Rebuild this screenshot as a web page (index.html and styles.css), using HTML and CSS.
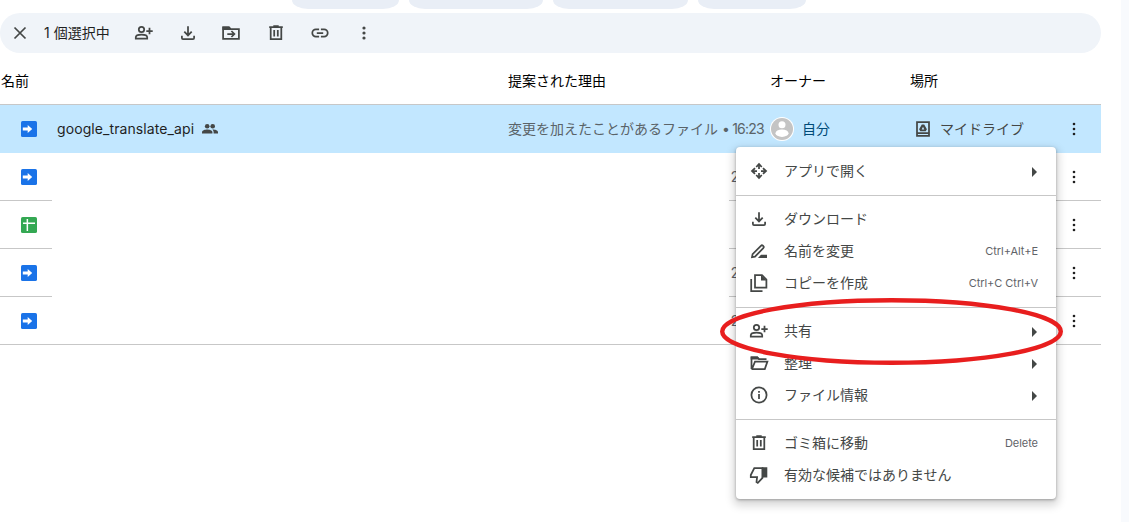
FILE: index.html
```html
<!DOCTYPE html>
<html lang="ja">
<head>
<meta charset="utf-8">
<title>ドライブ</title>
<link rel="stylesheet" href="styles.css">
</head>
<body>
<svg class="defs" aria-hidden="true">
  <symbol id="close" viewBox="0 0 20 20"><path class="l" d="M4.500 4.500l11 11M15.500 4.500l-11 11"/></symbol>
  <symbol id="person" viewBox="0 0 20 20"><circle class="l" cx="7.500" cy="6.500" r="2.700"/><path class="l" d="M1.800 15.700v-1.500c0-1.700 3-2.600 5.700-2.600s5.700.9 5.700 2.600v1.500zM12.300 8h6.400M15.500 4.800v6.400"/></symbol>
  <symbol id="download" viewBox="0 0 20 20"><path class="l" d="M10 3.300v8.500M6.300 8.700l3.700 3.700 3.700-3.700M3.900 12.800v2.300q0 1.100 1.100 1.100h10q1.100 0 1.100-1.100v-2.300"/></symbol>
  <symbol id="move" viewBox="0 0 20 20"><path class="l" d="M2.100 4.300h5.800l1.700 1.800h8.300v9.800H2.100zM6.300 11h6.500M10.400 8l3 3-3 3"/><path d="M1.500 3.500h6.800l1.700 2v1.400H1.500z"/></symbol>
  <symbol id="trash" viewBox="0 0 20 20"><path class="l" d="M4.700 4.500v11.700h10.600V4.500M3.200 4.200h13.600M7.300 3h5.400M8.200 7v6.500M11.800 7v6.500"/></symbol>
  <symbol id="link" viewBox="0 0 20 20"><path class="l" d="M9.100 6.400H5.900a3.600 3.600 0 000 7.200h3.200M10.900 6.400h3.200a3.600 3.600 0 010 7.200h-3.200M6.800 10h6.400"/></symbol>
  <symbol id="dots" viewBox="0 0 20 20"><circle cx="10" cy="5" r="1.600"/><circle cx="10" cy="10" r="1.600"/><circle cx="10" cy="15" r="1.600"/></symbol>
  <symbol id="rowdots" viewBox="0 0 20 20"><circle cx="10" cy="5" r="1.300"/><circle cx="10" cy="10" r="1.300"/><circle cx="10" cy="15" r="1.300"/></symbol>
  <symbol id="people" viewBox="0 0 16 12"><circle cx="5.200" cy="3.200" r="2.300"/><path d="M0 10.500V9.200c0-1.900 3-2.700 5.200-2.700s5.200.8 5.200 2.700v1.300z"/><circle cx="10.700" cy="3.200" r="2.300"/><path d="M11.600 10.500V9.200c0-1.100-.5-1.900-1.300-2.600 2.600-.1 5.700.8 5.700 2.600v1.300z"/></symbol>
  <symbol id="shortcut" viewBox="0 0 16 16"><rect width="16" height="16" rx="1.600" fill="#1a73e8"/><path fill="#fff" d="M1.800 6.400h4.900V4L11.200 8l-4.500 4V9.600H1.800z"/></symbol>
  <symbol id="sheet" viewBox="0 0 16 16"><rect width="16" height="16" rx="1.600" fill="#34a853"/><path fill="#fff" d="M5.600 2h1.500v3.600H14v1.500H7.100V14H5.600V7.100H2V5.600h3.600z"/></symbol>
  <symbol id="avatar" viewBox="0 0 24 24"><circle cx="12" cy="12" r="12" fill="#fff"/><circle cx="12" cy="12" r="11" fill="#c4c4c4"/><circle cx="12" cy="7.700" r="3.500" fill="#fff"/><ellipse cx="12" cy="16.200" rx="6.500" ry="3.700" fill="#fff"/></symbol>
  <symbol id="drive" viewBox="0 0 16 16"><path class="l" d="M2 1.200h12v13.600H2zM2 12h12"/><path fill-rule="evenodd" d="M6.800 3.500h2.400l2.700 4.700-1.200 2H5.300l-1.200-2zM8 5.700L6.700 8.400h2.600z"/></symbol>
  <symbol id="open" viewBox="0 0 20 20"><path d="M10 1.700l3.400 3.700-1.200 1.200L10 4.500 7.800 6.600 6.600 5.400zM10 18.300l-3.400-3.700 1.200-1.200 2.200 2.100 2.200-2.100 1.200 1.200zM1.700 10l3.700-3.400 1.200 1.200L4.500 10l2.100 2.200-1.200 1.200zM18.300 10l-3.700 3.400-1.200-1.200 2.100-2.200-2.100-2.200 1.200-1.200z"/><path class="l" d="M10 3v5M10 12v5M3 10h5M12 10h5"/></symbol>
  <symbol id="rename" viewBox="0 0 20 20"><path class="l" d="M3 16.200l.6-3.100 8.300-8.300q1-1 2-.1l.4.400q1 1 0 2L6 15.600z"/><path d="M12 13.700h6v3.200H8.900z"/></symbol>
  <symbol id="copy" viewBox="0 0 20 20"><path class="l" d="M6 2.200h7l4.400 4.400v8.100H6zM2.200 6v12h11.300"/><path d="M12 2l5.500 5.500H12z"/></symbol>
  <symbol id="folder" viewBox="0 0 20 20"><path class="l" d="M2.500 16V4.300h5.800L10 6.100h7.500M2.500 16h13.300l2.600-7.400H6L3 16"/><path d="M1.700 3.500h7l1.600 2v1H1.700z"/></symbol>
  <symbol id="info" viewBox="0 0 20 20"><circle class="l" cx="10" cy="10" r="7.600"/><path class="l" d="M10 9v5M10 6v1.700"/></symbol>
  <symbol id="thumb" viewBox="0 0 20 20"><path class="l" d="M13.500 3H5.300L1.800 10v2h6.300L7.500 17l1.300.8 4.700-5z"/><path d="M12.800 2.200h5.500v10.300h-4.200l-1.300 1z"/></symbol>
</svg>

<div class="page">
  <main class="content">
    <div class="chips"><span class="chip c1"></span><span class="chip c2"></span><span class="chip c3"></span><span class="chip c4"></span></div>
    <div class="toolbar">
      <svg class="ic close"><use href="#close"/></svg>
      <span class="count">1 個選択中</span>
      <div class="tools">
        <svg class="ic"><use href="#person"/></svg>
        <svg class="ic"><use href="#download"/></svg>
        <svg class="ic narrow"><use href="#move"/></svg>
        <svg class="ic"><use href="#trash"/></svg>
        <svg class="ic"><use href="#link"/></svg>
        <svg class="ic"><use href="#dots"/></svg>
      </div>
    </div>
    <div class="grid head"><span>名前</span><span>提案された理由</span><span>オーナー</span><span>場所</span></div>
    <div class="grid row selected">
      <span class="name"><svg class="file"><use href="#shortcut"/></svg><span class="filename">google_translate_api</span><svg class="people"><use href="#people"/></svg></span>
      <span class="reason">変更を加えたことがあるファイル <span class="time">• 16:23</span></span>
      <span class="owner"><svg class="avatar"><use href="#avatar"/></svg>自分</span>
      <span class="place"><svg class="drive"><use href="#drive"/></svg>マイドライブ</span>
      <svg class="more"><use href="#rowdots"/></svg>
    </div>
    <div class="row brief"><div class="left"><svg class="file"><use href="#shortcut"/></svg></div><div class="right"><span class="date">2</span><svg class="more"><use href="#rowdots"/></svg></div></div>
    <div class="row brief"><div class="left"><svg class="file"><use href="#sheet"/></svg></div><div class="right"><span class="date"></span><svg class="more"><use href="#rowdots"/></svg></div></div>
    <div class="row brief"><div class="left"><svg class="file"><use href="#shortcut"/></svg></div><div class="right"><span class="date">2</span><svg class="more"><use href="#rowdots"/></svg></div></div>
    <div class="row brief last"><div class="left"><svg class="file"><use href="#shortcut"/></svg></div><div class="right"><span class="date">2</span><svg class="more"><use href="#rowdots"/></svg></div></div>
  </main>
  <aside class="edge"></aside>

  <div class="menu">
    <div class="item"><svg class="ic"><use href="#open"/></svg><span>アプリで開く</span><i class="arrow"></i></div>
    <hr>
    <div class="item"><svg class="ic"><use href="#download"/></svg><span>ダウンロード</span></div>
    <div class="item"><svg class="ic"><use href="#rename"/></svg><span>名前を変更</span><kbd>Ctrl+Alt+E</kbd></div>
    <div class="item"><svg class="ic"><use href="#copy"/></svg><span>コピーを作成</span><kbd>Ctrl+C Ctrl+V</kbd></div>
    <hr>
    <div class="item"><svg class="ic"><use href="#person"/></svg><span>共有</span><i class="arrow"></i></div>
    <div class="item"><svg class="ic"><use href="#folder"/></svg><span>整理</span><i class="arrow"></i></div>
    <div class="item"><svg class="ic"><use href="#info"/></svg><span>ファイル情報</span><i class="arrow"></i></div>
    <hr>
    <div class="item"><svg class="ic"><use href="#trash"/></svg><span>ゴミ箱に移動</span><kbd>Delete</kbd></div>
    <div class="item"><svg class="ic"><use href="#thumb"/></svg><span>有効な候補ではありません</span></div>
  </div>
  <svg class="ring" viewBox="0 0 344 70"><ellipse cx="171.500" cy="34.500" rx="169.300" ry="31.300"/></svg>
</div>
</body>
</html>
```

FILE: styles.css
```css
* { box-sizing: border-box; }
body {
  margin: 0;
  background: #fff;
  color: #1f1f1f;
  font: 14px/20px Inter, "Noto Sans CJK JP", sans-serif;
}
.defs { position: absolute; width: 0; height: 0; }
svg { display: block; flex: none; fill: #444746; }
.l { fill: none; stroke: #444746; stroke-width: 1.75; }
.page { position: relative; display: flex; justify-content: space-between; width: 1129px; height: 522px; overflow: hidden; }
.content { width: 1101px; }
.edge { width: 8px; background: #f8fafd; }

.chips { display: flex; gap: 10px; height: 9px; margin-bottom: 4px; padding-left: 292px; }
.chip { height: 9px; border-radius: 0 0 16px 16px / 0 0 9px 9px; background: #e9eef6; }
.c1 { width: 107px; }
.c2 { width: 134px; }
.c3 { width: 135px; }
.c4 { width: 108px; }

.toolbar { display: flex; align-items: center; height: 40px; padding-left: 10px; border-radius: 20px; background: #f0f4f9; }
.ic { width: 20px; height: 20px; }
.count { width: 90px; margin-left: 14px; white-space: nowrap; }
.tools { display: flex; gap: 24px; }
.tools .narrow { margin: 0 1px 0 -1px; }

.grid { display: grid; grid-template-columns: 508px 262px 140px 149px 30px; align-items: center; }
.head { height: 52px; padding: 4px 0 0; border-bottom: 1px solid #c7c7c7; color: #000; }
.head span:first-child { padding-left: 1px; }
.row { height: 48px; }
.selected { background: #c2e7ff; color: #444746; }
.name, .owner, .place { display: flex; align-items: center; }
.file { width: 16px; height: 16px; margin-left: 21px; }
.filename { width: 137px; margin: 0 8px 0 20px; color: #1f1f1f; letter-spacing: .09px; white-space: nowrap; }
.people { width: 16px; height: 12px; }
.reason { color: #5a6368; white-space: nowrap; }
.time { letter-spacing: -.8px; }
.avatar { width: 24px; height: 24px; margin-right: 8px; }
.owner { color: #004a77; }
.drive { width: 16px; height: 16px; margin: 0 9px 0 5px; }
.more { width: 20px; height: 20px; margin-left: 5px; fill: #1f1f1f; }

.brief { display: flex; justify-content: space-between; }
.left, .right { display: flex; align-items: center; border-bottom: 1px solid #c7c7c7; }
.left { width: 52px; }
.right { width: 372px; }
.date { width: 330px; padding-left: 2px; color: #5f6368; font-family: Roboto, sans-serif; }
.last { border-bottom: 1px solid #c7c7c7; }
.last .left, .last .right { border: 0; }

.menu {
  position: absolute;
  left: 736px;
  top: 147px;
  width: 320px;
  padding: 8px 0;
  border-radius: 4px;
  background: #fff;
  box-shadow: 0 1px 3px rgba(0, 0, 0, .3), 0 4px 8px 3px rgba(0, 0, 0, .15);
}
.item { display: flex; align-items: center; height: 32px; padding: 0 18px 0 13px; color: #444746; }
.item span { flex: 1; margin-left: 15px; }
.item kbd { color: #5f6368; font: 11px/16px Inter, sans-serif; letter-spacing: -.05px; }
.arrow { width: 5px; margin: 2px 1px 0 0; border: solid transparent; border-width: 5px 0 5px 5px; border-left-color: #444746; }
.menu hr { height: 1px; margin: 8px 0 7px; border: 0; background: #c7c7c7; }
.ring { position: absolute; left: 720px; top: 297px; width: 344px; height: 70px; }
.ring ellipse { fill: none; stroke: #e81e1e; stroke-width: 4.4; }
```
